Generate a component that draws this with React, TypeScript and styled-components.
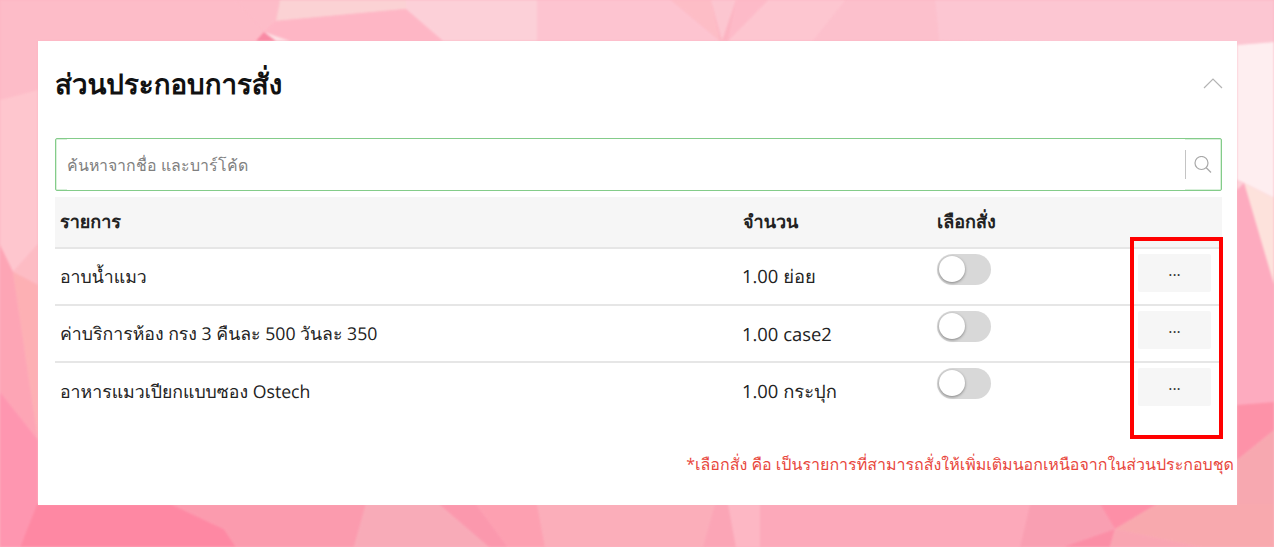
import React from 'react';
import styled, { createGlobalStyle } from 'styled-components';

const GlobalStyle = createGlobalStyle`
  html, body {
    margin: 0;
    padding: 0;
    background: #fcb4c2;
  }
  * {
    box-sizing: border-box;
  }
`;

const Page = styled.div`
  position: relative;
  width: 1274px;
  height: 547px;
  overflow: hidden;
  padding: 41px 37px 42px 38px;
  font-family: 'Open Sans', 'Noto Sans', Tahoma, sans-serif;
  text-rendering: geometricPrecision;
  color: #222;
`;

const Backdrop = styled.svg`
  position: absolute;
  left: 0;
  top: 0;
  width: 1274px;
  height: 547px;
  filter: blur(1px);
`;

const Card = styled.section`
  position: relative;
  height: 464px;
  background: #fff;
  padding: 0 15px 0 17px;
`;

const CardHeader = styled.header`
  display: flex;
  align-items: center;
  justify-content: space-between;
  height: 97px;
  padding-bottom: 9px;
`;

const Title = styled.h2`
  margin: 0;
  font-size: 27.7px;
  font-weight: 700;
  color: #111;
`;

const Chevron = styled.svg`
  margin: -5px -1px 0 0;
`;

const SearchBox = styled.div`
  display: flex;
  align-items: center;
  height: 53px;
  border: 1px solid #84cc8a;
  box-shadow: inset 0 0 0 0.5px #b4e2b7;
  border-radius: 2px;
  padding: 0 9px 0 11px;
  margin-bottom: 6px;
`;

const SearchInput = styled.input`
  flex: 1;
  border: 0;
  outline: 0;
  height: 100%;
  padding: 0;
  font: inherit;
  font-size: 15.9px;
  color: #333;
  &::placeholder {
    color: #808080;
    opacity: 1;
  }
`;

const SearchDivider = styled.span`
  width: 1px;
  height: 29px;
  background: #c4c4c4;
  margin-right: 8px;
`;

const Grid = styled.div`
  display: grid;
  grid-template-columns: 683px 194px 205px 85px;
`;

const HeadCell = styled.div`
  height: 52px;
  display: flex;
  align-items: center;
  padding: 0 0 2px 5px;
  background: #f6f6f6;
  border-bottom: 2px solid #e6e6e6;
  font-size: 18px;
  font-weight: 700;
  color: #222;
`;

const Cell = styled.div<{ $last: boolean }>`
  height: 57px;
  display: flex;
  align-items: center;
  padding: 1px 0 0 5px;
  border-bottom: ${props => (props.$last ? '0' : '2px solid #e6e6e6')};
  font-size: 17.7px;
  color: #222;
`;

const QtyCell = styled(Cell)`
  font-size: 18.4px;
  padding-left: 4px;
`;

const ToggleCell = styled(Cell)`
  align-items: flex-start;
  padding-top: 5px;
`;

const ActionCell = styled(Cell)`
  padding-left: 1px;
  align-items: flex-start;
  padding-top: 5px;
`;

const Toggle = styled.span`
  position: relative;
  display: block;
  width: 54px;
  height: 31px;
  border-radius: 16px;
  background: #d8d8d8;
`;

const Knob = styled.span`
  position: absolute;
  left: 2px;
  top: 2px;
  width: 26px;
  height: 26px;
  border-radius: 50%;
  background: #fff;
  box-shadow: 0 1px 3px rgba(0, 0, 0, 0.4);
`;

const MoreButton = styled.button`
  width: 73px;
  height: 38px;
  padding: 0 0 6px;
  border: 0;
  border-radius: 2px;
  background: #f6f6f6;
  color: #333;
  font-family: inherit;
  font-size: 16px;
  line-height: 1;
`;

const Note = styled.p`
  position: absolute;
  right: 3px;
  top: 412px;
  margin: 0;
  font-size: 16px;
  color: #e8463c;
  white-space: nowrap;
`;

const Highlight = styled.div`
  position: absolute;
  left: 1130px;
  top: 237px;
  width: 93px;
  height: 202px;
  border: 4px solid #f00;
`;

const items = [
  { name: 'อาบน้ำแมว', qty: '1.00 ย่อย' },
  { name: 'ค่าบริการห้อง กรง 3 คืนละ 500 วันละ 350', qty: '1.00 case2' },
  { name: 'อาหารแมวเปียกแบบซอง Ostech', qty: '1.00 กระปุก' },
];

// low-poly wallpaper facets, only the parts outside the card are visible
const facets: [string, string][] = [
  ['0,0 236,0 264,32 256,41 38,41 38,90 0,100', '#fdbcc8'],
  ['236,0 280,0 276,21 264,32', '#fdbcc8'],
  ['280,0 406,0 406,9 276,21', '#fbd2d4'],
  ['276,21 406,9 443,41 290,41 264,32', '#feb6c5'],
  ['264,32 256,41 276,41', '#f98aa4'],
  ['264,32 276,41 290,41', '#fde0e4'],
  ['406,0 537,0 537,41 443,41 406,9', '#fcd0d8'],
  ['537,0 671,0 720,41 537,41', '#fdc4d0'],
  ['671,0 711,0 720,41', '#fdbdc6'],
  ['711,0 736,0 722,41', '#fcc6d0'],
  ['736,0 768,0 728,41', '#fdbac8'],
  ['768,0 846,0 813,41 728,41', '#fdc6d0'],
  ['846,0 935,0 939,41 813,41', '#fcc0cc'],
  ['935,0 1274,0 1274,42 1237,45 939,41', '#fcc6d2'],
  ['0,100 38,90 38,244 13,272 0,245', '#fec6ce'],
  ['38,244 13,272 38,285', '#fdbcc4'],
  ['0,245 13,272 38,440 0,392', '#fda5b5'],
  ['13,272 38,285 38,440', '#fdb0b4'],
  ['0,392 38,440 38,504 37,504 20,547 0,547', '#fe96b0'],
  ['37,504 171,504 224,529 236,547 20,547', '#fe88a3'],
  ['171,504 366,504 354,547 236,547 224,529', '#fb9bae'],
  ['366,504 439,504 489,547 354,547', '#f8abb8'],
  ['439,504 476,504 508,547 489,547', '#fb98ad'],
  ['476,504 537,504 545,547 508,547', '#fda0b1'],
  ['537,504 715,504 703,547 545,547', '#fbaeba'],
  ['703,547 715,504 728,504 736,547', '#fba5b6'],
  ['728,504 760,504 760,547 736,547', '#fdb7c4'],
  ['760,504 1030,504 1020,547 760,547', '#fca9ba'],
  ['1030,504 1100,504 1115,529 1063,547 1020,547', '#f99fb2'],
  ['1100,504 1157,504 1115,529', '#fd8fa7'],
  ['1115,529 1110,547 1063,547', '#fb8ea6'],
  ['1157,504 1274,504 1274,547 1200,547 1115,529', '#f8a9ae'],
  ['1115,529 1200,547 1110,547', '#f9a5b2'],
  ['1237,45 1274,42 1274,198 1244,183 1237,180', '#feeef0'],
  ['1244,183 1274,198 1274,285', '#fde2dc'],
  ['1237,180 1244,183 1274,285 1274,402 1237,405', '#fdabbf'],
  ['1237,180 1244,183 1237,190', '#fdd0d8'],
  ['1237,405 1274,402 1274,430 1237,460', '#fd92a8'],
  ['1237,460 1274,430 1274,504 1237,504', '#f7a8b0'],
];

const ChevronUp = () => (
  <Chevron width="20" height="12" viewBox="0 0 20 12" fill="none" stroke="#b4b4b4" strokeWidth="1.2">
    <path d="M1 11 L10 2 L19 11" />
  </Chevron>
);

const SearchIcon = () => (
  <svg width="18" height="18" viewBox="0 0 18 18" fill="none" stroke="#a8a8a8" strokeWidth="1.2">
    <circle cx="7.5" cy="7" r="6.5" />
    <path d="M12 11.5 L17 16.5" />
  </svg>
);

const App: React.FC = () => {
  return (
    <Page>
      <GlobalStyle />
      <Backdrop viewBox="0 0 1274 547">
        {facets.map(([points, fill]) => (
          <polygon key={points} points={points} fill={fill} />
        ))}
      </Backdrop>
      <Card>
        <CardHeader>
          <Title>ส่วนประกอบการสั่ง</Title>
          <ChevronUp />
        </CardHeader>
        <SearchBox>
          <SearchInput placeholder="ค้นหาจากชื่อ และบาร์โค้ด" />
          <SearchDivider />
          <SearchIcon />
        </SearchBox>
        <Grid>
          <HeadCell>รายการ</HeadCell>
          <HeadCell>จำนวน</HeadCell>
          <HeadCell>เลือกสั่ง</HeadCell>
          <HeadCell />
          {items.map((item, i) => {
            const last = i === items.length - 1;
            return (
              <React.Fragment key={item.name}>
                <Cell $last={last}>{item.name}</Cell>
                <QtyCell $last={last}>{item.qty}</QtyCell>
                <ToggleCell $last={last}>
                  <Toggle>
                    <Knob />
                  </Toggle>
                </ToggleCell>
                <ActionCell $last={last}>
                  <MoreButton>...</MoreButton>
                </ActionCell>
              </React.Fragment>
            );
          })}
        </Grid>
        <Note>*เลือกสั่ง คือ เป็นรายการที่สามารถสั่งให้เพิ่มเติมนอกเหนือจากในส่วนประกอบชุด</Note>
      </Card>
      <Highlight />
    </Page>
  );
};

export default App;
